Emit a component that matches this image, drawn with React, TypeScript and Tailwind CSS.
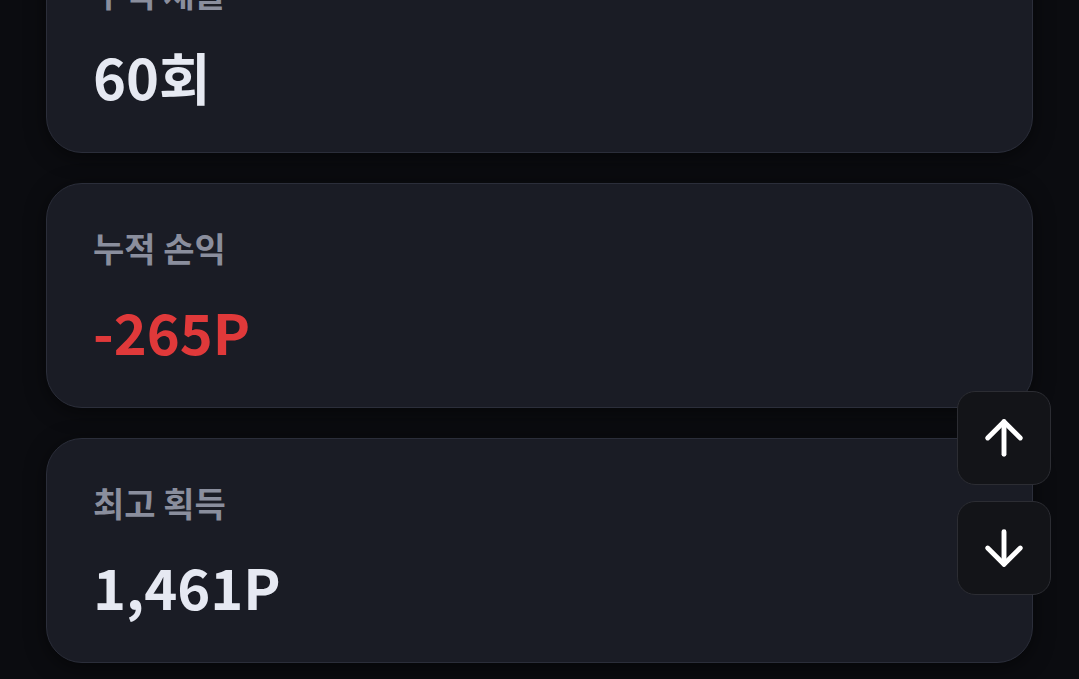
import React from "react";
import { ArrowUp, ArrowDown } from "lucide-react";

const font = { fontFamily: '"Noto Sans CJK KR", "Noto Sans", sans-serif' };

function Card({ label, value, red }: { label: string; value: string; red?: boolean }) {
  return (
    <div className="h-[225px] shrink-0 rounded-[36px] border border-[#2b2e3a] bg-[#1a1c25] pl-[46px] pt-[47px] shadow-[0_4px_20px_rgba(0,0,0,0.5)]">
      <div className="text-[34px] font-bold leading-none text-[#8a8e9d]">{label}</div>
      <div className={`mt-[38px] text-[56px] font-bold leading-none ${red ? "text-[#e0393a]" : "text-[#e6e9f2]"}`}>{value}</div>
    </div>
  );
}

export default function App() {
  return (
    <div className="h-[679px] w-full overflow-hidden bg-[#0b0c10]" style={font}>
      <div className="mt-[-72px] flex flex-col gap-[30px] px-[46px]">
        <Card label="누적 채굴" value="60회" />
        <Card label="누적 손익" value="-265P" red />
        <Card label="최고 획득" value="1,461P" />
      </div>
      <div className="fixed right-[28px] top-[391px] flex flex-col gap-[16px]">
        <button className="flex h-[94px] w-[94px] items-center justify-center rounded-[18px] border border-[#2c2d33] bg-[#131418] text-white">
          <ArrowUp size={56} strokeWidth={2.1} />
        </button>
        <button className="flex h-[94px] w-[94px] items-center justify-center rounded-[18px] border border-[#2c2d33] bg-[#131418] text-white">
          <ArrowDown size={56} strokeWidth={2.1} />
        </button>
      </div>
    </div>
  );
}
